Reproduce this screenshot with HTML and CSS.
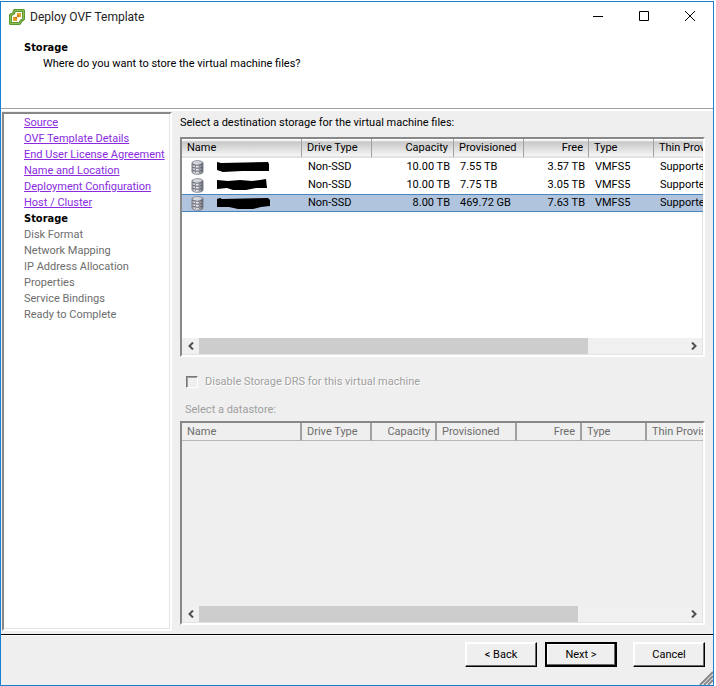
FILE: index.html
```html
<!DOCTYPE html>
<html lang="en">
<head>
<meta charset="utf-8">
<title>Deploy OVF Template</title>
<link rel="stylesheet" href="styles.css">
</head>
<body>
<svg class="defs" width="0" height="0" aria-hidden="true">
  <defs>
    <linearGradient id="metal" x1="0" x2="1" y1="0" y2="0">
      <stop offset="0" stop-color="#9a9ca6"/>
      <stop offset=".35" stop-color="#fafafc"/>
      <stop offset=".6" stop-color="#c9cad0"/>
      <stop offset="1" stop-color="#5c5f6b"/>
    </linearGradient>
    <symbol id="disk" viewBox="0 0 13 15">
      <path d="M1 3C1 0 12 0 12 3V12C12 15 1 15 1 12Z" fill="url(#metal)" stroke="#7d7f8a" stroke-width="1"/>
      <ellipse cx="6.500" cy="2.600" rx="4.500" ry="1.300" fill="#d3d4da"/>
      <path d="M1.500 4.500Q6.500 6 11.500 4.500M1.500 7.500Q6.500 9 11.500 7.500M1.500 10.500Q6.500 12 11.500 10.500" fill="none" stroke="#5e616d"/>
      <path d="M4.500 5V13M8.500 5V13" stroke="#8b8d97" stroke-width="1"/>
    </symbol>
    <symbol id="left" viewBox="0 0 6 8"><path d="M5 .5 1.500 4 5 7.500" fill="none" stroke="#505050" stroke-width="2"/></symbol>
    <symbol id="right" viewBox="0 0 6 8"><path d="M1 .5 4.500 4 1 7.500" fill="none" stroke="#505050" stroke-width="2"/></symbol>
  </defs>
</svg>
<div class="window">
  <header class="titlebar">
    <svg class="logo" viewBox="0 0 16 16" aria-hidden="true">
      <path d="M5.500 1.500H14.500V10L12.500 11.500 10.500 14.500H1.500V6L4.500 4.500Z" fill="#fff" stroke="#5d9732" stroke-width="3" stroke-linejoin="round"/>
      <path d="M5.500 1.500H14.500V10L12.500 11.500 10.500 14.500H1.500V6L4.500 4.500Z" fill="none" stroke="#8cbf56" stroke-width="1"/>
      <path d="M7 4H12V9H9V12H4V7H7Z" fill="#eda42c"/>
      <path d="M4 7H7V4H8V8H4ZM8 12V8H12V9H9V12Z" fill="#fff3d8"/>
      <path d="M6 8H8V6H10V8H8V10H6Z" fill="#c9781b"/>
    </svg>
    <h1 class="title">Deploy OVF Template</h1>
    <div class="window-buttons">
      <button class="window-button" aria-label="Minimize"><svg viewBox="0 0 12 12" class="glyph"><path d="M1 5.500H11"/></svg></button>
      <button class="window-button" aria-label="Maximize"><svg viewBox="0 0 12 12" class="glyph"><path d="M1.500 .5H10.500V9.500H1.500Z"/></svg></button>
      <button class="window-button" aria-label="Close"><svg viewBox="0 0 12 12" class="glyph"><path d="M1 0 11 10M11 0 1 10"/></svg></button>
    </div>
  </header>
  <section class="intro">
    <h2 class="step-title">Storage</h2>
    <p class="step-text">Where do you want to store the virtual machine files?</p>
  </section>
  <div class="body">
    <nav class="steps" aria-label="Steps">
      <ul class="step-list">
        <li><a href="#source">Source</a></li>
        <li><a href="#details">OVF Template Details</a></li>
        <li><a href="#license">End User License Agreement</a></li>
        <li><a href="#location">Name and Location</a></li>
        <li><a href="#configuration">Deployment Configuration</a></li>
        <li><a href="#host">Host / Cluster</a></li>
        <li class="current" aria-current="step">Storage</li>
        <li>Disk Format</li>
        <li>Network Mapping</li>
        <li>IP Address Allocation</li>
        <li>Properties</li>
        <li>Service Bindings</li>
        <li>Ready to Complete</li>
      </ul>
    </nav>
    <main class="content">
      <p class="label" id="storage-label">Select a destination storage for the virtual machine files:</p>
      <div class="list list-storage">
        <div class="viewport">
          <table class="grid" aria-labelledby="storage-label">
            <colgroup><col class="c-name"><col class="c-drive"><col class="c-capacity"><col class="c-prov"><col class="c-free"><col class="c-type"><col class="c-thin"></colgroup>
            <thead><tr><th>Name</th><th>Drive Type</th><th class="num">Capacity</th><th>Provisioned</th><th class="num">Free</th><th>Type</th><th>Thin Provisioning</th></tr></thead>
            <tbody>
              <tr><td><span class="name"><svg class="disk" aria-hidden="true"><use href="#disk"/></svg><svg class="redacted" viewBox="0 0 54 12" aria-hidden="true"><path d="M1 1 5 2 52 1 53 3V10L26 10 7 11 1 9Z"/></svg></span></td><td>Non-SSD</td><td class="num">10.00 TB</td><td>7.55 TB</td><td class="num">3.57 TB</td><td>VMFS5</td><td>Supported</td></tr>
              <tr><td><span class="name"><svg class="disk" aria-hidden="true"><use href="#disk"/></svg><svg class="redacted" viewBox="0 0 54 12" aria-hidden="true"><path d="M1 1 12 2 24 1 36 2 44 1 50 0 51 9 40 9 30 11 17 11 11 9 1 10Z"/></svg></span></td><td>Non-SSD</td><td class="num">10.00 TB</td><td>7.75 TB</td><td class="num">3.05 TB</td><td>VMFS5</td><td>Supported</td></tr>
              <tr class="selected"><td><span class="name"><svg class="disk" aria-hidden="true"><use href="#disk"/></svg><svg class="redacted" viewBox="0 0 54 12" aria-hidden="true"><path d="M1 2 4 1 6 2 52 1 54 3V9L45 10 37 12 22 12 13 10 1 10Z"/></svg></span></td><td>Non-SSD</td><td class="num">8.00 TB</td><td>469.72 GB</td><td class="num">7.63 TB</td><td>VMFS5</td><td>Supported</td></tr>
            </tbody>
          </table>
        </div>
        <div class="scrollbar">
          <button class="arrow" aria-label="Scroll left"><svg class="chevron"><use href="#left"/></svg></button>
          <div class="track"><div class="thumb thumb-storage"></div></div>
          <button class="arrow" aria-label="Scroll right"><svg class="chevron"><use href="#right"/></svg></button>
        </div>
      </div>
      <div class="drs"><input class="check" type="checkbox" id="drs" disabled><label for="drs">Disable Storage DRS for this virtual machine</label></div>
      <p class="label-disabled" id="datastore-label">Select a datastore:</p>
      <div class="list list-datastore">
        <div class="viewport">
          <table class="grid grid-disabled" aria-labelledby="datastore-label">
            <colgroup><col class="c-name"><col class="c-drive"><col class="c-capacity"><col class="c-prov"><col class="c-free"><col class="c-type"><col class="c-thin"></colgroup>
            <thead><tr><th>Name</th><th>Drive Type</th><th class="num">Capacity</th><th>Provisioned</th><th class="num">Free</th><th>Type</th><th>Thin Provisioning</th></tr></thead>
          </table>
        </div>
        <div class="scrollbar">
          <button class="arrow" aria-label="Scroll left"><svg class="chevron"><use href="#left"/></svg></button>
          <div class="track"><div class="thumb thumb-datastore"></div></div>
          <button class="arrow" aria-label="Scroll right"><svg class="chevron"><use href="#right"/></svg></button>
        </div>
      </div>
    </main>
  </div>
  <footer class="footer">
    <button class="button">&lt; Back</button>
    <button class="button button-default">Next &gt;</button>
    <button class="button button-cancel">Cancel</button>
    <svg class="grip" viewBox="0 0 14 14" aria-hidden="true"><path d="M1 14 14 1M5 14 14 5M9 14 14 9" stroke="#888" stroke-width="2"/></svg>
  </footer>
</div>
</body>
</html>
```
FILE: styles.css
```css
* {
  box-sizing: border-box;
}

body {
  margin: 0;
  background: #fff;
  color: #000;
  font: 11px/16px Roboto, sans-serif;
}

h1, h2, p, ul {
  margin: 0;
  padding: 0;
}

button {
  padding: 0;
  border: 0;
  background: none;
  color: inherit;
  font: inherit;
}

.defs {
  position: absolute;
}

.window {
  display: flex;
  flex-direction: column;
  min-height: calc(100vh - 1px);
  margin: 1px 2px 0 0;
  border: 1px solid #1a80cf;
  background: #efefef;
}

.titlebar {
  display: flex;
  align-items: center;
  height: 29px;
  padding-left: 8px;
  background: #fff;
}

.logo {
  width: 16px;
  height: 16px;
}

.title {
  flex: 1;
  padding-left: 5px;
  color: #222;
  font: 12px/16px Roboto, sans-serif;
}

.window-buttons {
  display: flex;
}

.window-button {
  display: flex;
  align-items: center;
  justify-content: center;
  width: 46px;
  height: 28px;
}

.glyph {
  width: 12px;
  height: 12px;
  fill: none;
  stroke: #000;
}

.intro {
  height: 80px;
  padding: 9px 23px;
  border-bottom: 2px solid #fff;
  background: #fff;
  box-shadow: inset 0 -1px #a0a0a0;
}

.step-title {
  font: bold 11px/16px "DejaVu Sans Condensed", "DejaVu Sans", sans-serif;
}

.step-text {
  padding-left: 19px;
}

.body {
  display: flex;
  flex: 1;
  padding: 1px 8px 3px 1px;
}

.steps,
.list {
  border: 2px solid;
  border-color: #888 #fff #fff #888;
  box-shadow: inset -1px -1px #e3e3e3;
}

.steps {
  flex: none;
  width: 170px;
  padding: 1px 0 0 20px;
  background: #fff;
}

.step-list {
  color: #6d6d6d;
  list-style: none;
  white-space: nowrap;
}

.step-list a {
  color: #8a2be2;
}

.step-list .current {
  color: #000;
  font: bold 11px/16px "DejaVu Sans Condensed", "DejaVu Sans", sans-serif;
}

.content {
  display: flex;
  flex: 1;
  flex-direction: column;
  min-width: 0;
  padding: 3px 0 6px 8px;
}

.label {
  padding-bottom: 6px;
}

.list {
  display: flex;
  flex-direction: column;
}

.list-storage {
  height: 220px;
  background: #fff;
}

.list-datastore {
  flex: 1;
  min-height: 120px;
}

.viewport {
  flex: 1;
  overflow: hidden;
}

.grid {
  width: 620px;
  border-spacing: 0;
  table-layout: fixed;
}

.c-name { width: 120px; }
.c-drive { width: 70px; }
.c-capacity { width: 82px; }
.c-prov { width: 70px; }
.c-free { width: 65px; }
.c-type { width: 65px; }

.grid-disabled .c-capacity { width: 65px; }
.grid-disabled .c-prov { width: 80px; }

.grid th {
  height: 19px;
  padding: 0 5px;
  border-right: 1px solid #a0a0a0;
  border-bottom: 2px solid #e3e3e3;
  background: linear-gradient(#fff, #fff 1px, #c8c8c8 3px, #f6f6f6);
  font-weight: normal;
  line-height: 16px;
  text-align: left;
  white-space: nowrap;
}

.grid td {
  height: 18px;
  padding: 0 6px;
  line-height: 16px;
  white-space: nowrap;
}

.grid .num {
  text-align: right;
}

.grid td.num {
  padding-right: 4px;
}

.grid .selected td {
  border-top: 1px solid #4a86bd;
  border-bottom: 1px solid #4a86bd;
  background: #b0c4de;
}

.grid-disabled th {
  height: 18px;
  border-right: 2px solid #a0a0a0;
  border-bottom: 1px solid #b8b8b8;
  background: #efefef;
  color: #6d6d6d;
}

.name {
  display: flex;
  align-items: center;
  gap: 12px;
  height: 16px;
  padding-left: 3px;
}

.disk {
  width: 13px;
  height: 15px;
}

.redacted {
  width: 54px;
  height: 12px;
}

.scrollbar {
  display: flex;
  flex: none;
  height: 16px;
  margin-right: 1px;
  margin-bottom: 1px;
  background: #f0f0f0;
}

.arrow {
  display: flex;
  align-items: center;
  justify-content: center;
  width: 17px;
}

.chevron {
  width: 6px;
  height: 8px;
}

.track {
  flex: 1;
}

.thumb {
  height: 100%;
  background: #cdcdcd;
}

.thumb-storage { width: 80%; }
.thumb-datastore { width: 78%; }

.drs {
  display: flex;
  align-items: center;
  gap: 7px;
  padding: 17px 6px 0;
  color: #a0a0a0;
  text-shadow: 1px 1px #fff;
}

.check {
  width: 12px;
  height: 12px;
  margin: 0;
  border: 1px solid;
  border-color: #777 #fff #fff #777;
  appearance: none;
  box-shadow: inset 1px 1px #a0a0a0;
}

.label-disabled {
  padding: 12px 5px 3px;
  color: #a0a0a0;
}

.footer {
  position: relative;
  display: flex;
  justify-content: flex-end;
  gap: 8px;
  height: 51px;
  padding: 7px 8px 0;
  border-top: 1px solid #000;
  box-shadow: inset 0 1px #fff;
}

.button {
  width: 72px;
  height: 25px;
  border: 1px solid;
  border-color: #fff #000 #000 #fff;
  box-shadow: inset -1px -1px #696969, inset 1px 1px #fff;
}

.button-default {
  border: 2px solid #000;
}

.button-cancel {
  margin-left: 8px;
}

.grip {
  position: absolute;
  right: 0;
  bottom: 0;
  width: 14px;
  height: 14px;
}
```
